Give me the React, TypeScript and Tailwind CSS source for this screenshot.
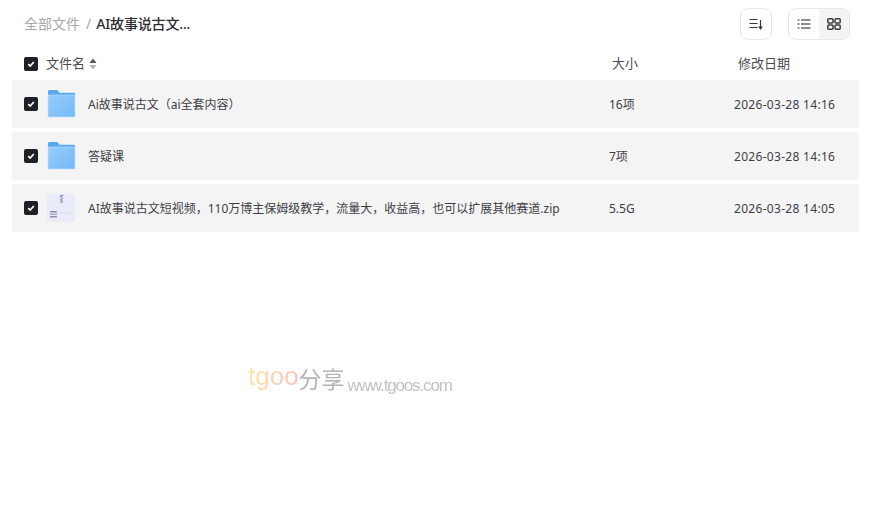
import React from 'react';

const FONT = '"Noto Sans", "Noto Sans CJK SC", sans-serif';
const MARK_FONT = '"Liberation Sans", "Noto Sans CJK SC", sans-serif';

type Row = { name: string; size: string; date: string; kind: 'folder' | 'zip' };

const rows: Row[] = [
  { name: 'Ai故事说古文（ai全套内容）', size: '16项', date: '2026-03-28 14:16', kind: 'folder' },
  { name: '答疑课', size: '7项', date: '2026-03-28 14:16', kind: 'folder' },
  { name: 'AI故事说古文短视频，110万博主保姆级教学，流量大，收益高，也可以扩展其他赛道.zip', size: '5.5G', date: '2026-03-28 14:05', kind: 'zip' },
];

function Check() {
  return (
    <span className="flex h-[14px] w-[14px] shrink-0 items-center justify-center rounded-[2px] bg-[#1f2025]">
      <svg width="10" height="10" viewBox="0 0 10 10" fill="none">
        <path d="M2.2 5.2 4.2 7.1 7.8 3" stroke="#fff" strokeWidth="1.7" />
      </svg>
    </span>
  );
}

function FolderIcon() {
  return (
    <svg width="30" height="30" viewBox="0 0 30 30" className="shrink-0">
      <defs>
        <linearGradient id="folderBody" x1="0" y1="0" x2="1" y2="1">
          <stop offset="0" stopColor="#96cdfb" />
          <stop offset="1" stopColor="#74b9f7" />
        </linearGradient>
      </defs>
      <path d="M2 2.500C2 1.700 2.700 1 3.500 1h7c.8 0 1.300.3 1.800 1l1.200 1.700H28c.6 0 1 .4 1 1V9H2z" fill="#5aa9f0" />
      <path d="M2 6h26c.6 0 1 .4 1 1v20c0 .6-.4 1-1 1H3c-.6 0-1-.4-1-1z" fill="url(#folderBody)" stroke="#c4e1fb" strokeWidth="0.600" />
      <rect x="23" y="8.500" width="3.500" height="2" fill="#84bcee" />
    </svg>
  );
}

function ZipIcon() {
  return (
    <svg width="30" height="30" viewBox="0 0 30 30" className="shrink-0">
      <path d="M1 2.500C1 1.700 1.700 1 2.500 1h25c.8 0 1.500.7 1.500 1.500V29H2.500C1.700 29 1 28.300 1 27.500z" fill="#e9ebf8" />
      <path d="M14 2.500h2.500l-2 1.500 2 1.500-2 1.500 2 1.500-2 1.500" fill="none" stroke="#8f97c2" strokeWidth="1.100" />
      <rect x="4" y="18" width="7" height="1.500" fill="#8b91b5" />
      <rect x="4" y="20.500" width="7" height="1.500" fill="#a5abc8" />
      <rect x="4" y="23" width="7" height="1.500" fill="#8b91b5" />
      <rect x="14" y="19" width="11" height="2" fill="#dfe2f2" />
    </svg>
  );
}

export default function App() {
  return (
    <div className="h-[514px] w-[874px] overflow-hidden bg-white" style={{ fontFamily: FONT }}>
      <div className="flex h-[48px] items-center justify-between pl-[24px] pr-[24px]">
        <div className="flex items-center text-[14px] leading-none">
          <span className="text-[#a8a6aa]">全部文件</span>
          <span className="ml-[6px] mr-[5px] text-[#a8a6aa]">/</span>
          <span className="font-medium tracking-[-0.15px] text-[#2b2d33]">AI故事说古文...</span>
        </div>
        <div className="flex items-center gap-[16px]">
          <button className="flex h-[32px] w-[32px] items-center justify-center rounded-[8px] border border-[#e7e7e9]">
            <svg width="16" height="16" viewBox="0 0 16 16" fill="none" stroke="#33353b" strokeWidth="1.200">
              <path d="M1.500 3.500h8M1.500 7.500h8M1.500 11.500h8M12.500 4v8" />
              <path d="M11.200 11l1.300 2 1.300-2z" fill="#33353b" />
            </svg>
          </button>
          <div className="flex h-[32px] w-[62px] overflow-hidden rounded-[8px] border border-[#e7e7e9]">
            <div className="flex flex-1 items-center justify-center">
              <svg width="14" height="14" viewBox="0 0 14 14" fill="none" stroke="#1f2025" strokeWidth="1.200">
                <path d="M0.500 3h2M4 3h9.500M0.500 7h2M4 7h9.500M0.500 11h2M4 11h9.500" />
              </svg>
            </div>
            <div className="flex flex-1 items-center justify-center bg-[#f4f4f4]">
              <svg width="14" height="14" viewBox="0 0 14 14" fill="none" stroke="#3a3c42" strokeWidth="1.500">
                <rect x="0.800" y="1.800" width="5.200" height="4.200" rx="1" />
                <rect x="8" y="1.800" width="5.200" height="4.200" rx="1" />
                <rect x="0.800" y="8" width="5.200" height="4.200" rx="1" />
                <rect x="8" y="8" width="5.200" height="4.200" rx="1" />
              </svg>
            </div>
          </div>
        </div>
      </div>

      <div className="flex h-[32px] items-center pl-[24px] text-[13px] text-[#4a4c55]">
        <Check />
        <span className="ml-[8px] w-[39px]">文件名</span>
        <svg width="8" height="12" viewBox="0 0 8 12" className="ml-[4px] shrink-0">
          <path d="M4 .5 7.500 5H.5z" fill="#55575c" />
          <path d="M4 11.500 .5 7h7z" fill="#b3b3b6" />
        </svg>
        <span className="ml-[515px] w-[126px]">大小</span>
        <span>修改日期</span>
      </div>

      <div className="ml-[12px] flex w-[847px] flex-col gap-[4px]">
        {rows.map((r) => (
          <div key={r.name} className="flex h-[48px] items-center rounded-[4px] bg-[#f4f4f4] pl-[12px] text-[12px] text-[#3c3e46]">
            <Check />
            <span className="ml-[8px] flex">{r.kind === 'folder' ? <FolderIcon /> : <ZipIcon />}</span>
            <span className="ml-[12px] w-[521px] truncate pt-[1px]">{r.name}</span>
            <span className="w-[125px] pt-[1px]">{r.size}</span>
            <span className="pt-[1px] tracking-[0.3px]">{r.date}</span>
          </div>
        ))}
      </div>

      <div className="mt-[130px] flex h-[32px] items-end pl-[248px] leading-none blur-[0.4px]" style={{ fontFamily: MARK_FONT }}>
        <span className="bg-gradient-to-r from-[#fde6a8] to-[#fdc0b8] bg-clip-text pb-[2px] text-[26px] leading-[32px] text-transparent">tgoo</span>
        <span className="pb-[2px] text-[23px] text-[#b5b5b5]">分享</span>
        <span className="ml-[3px] text-[17px] tracking-[-1.15px] text-[#c3c3c3]">www.tgoos.com</span>
      </div>
    </div>
  );
}
